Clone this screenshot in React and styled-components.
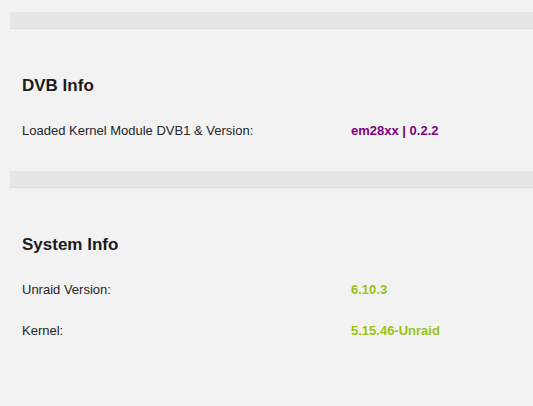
import styled, { createGlobalStyle } from 'styled-components';

const GlobalStyle = createGlobalStyle`
  html, body {
    margin: 0;
    background: #f2f2f2;
    font-family: "Liberation Sans", Arial, sans-serif;
  }
`;

const Page = styled.main`
  padding: 12px 0 0 10px;
`;

const Band = styled.div`
  height: 16px;
  background: #e6e6e6;
  border-bottom: 1px solid #dedede;
`;

const Body = styled.div`
  padding: 45px 0 20px 12px;
`;

const Title = styled.h2`
  margin: 0 0 12px;
  font-size: 17px;
  line-height: 24px;
  font-weight: bold;
  color: #1c1b1b;
`;

const Row = styled.div`
  display: flex;
  height: 41px;
  line-height: 41px;
  font-size: 13px;
`;

const Label = styled.span`
  width: 329px;
  color: #262626;
`;

const Value = styled.span`
  font-weight: bold;
  color: ${(p) => p.$color};
`;

const sections = [
  {
    title: 'DVB Info',
    color: '#800080',
    rows: [['Loaded Kernel Module DVB1 & Version:', 'em28xx | 0.2.2']],
  },
  {
    title: 'System Info',
    color: '#98c414',
    rows: [
      ['Unraid Version:', '6.10.3'],
      ['Kernel:', '5.15.46-Unraid'],
    ],
  },
];

export default function App() {
  return (
    <>
      <GlobalStyle />
      <Page>
        {sections.map((s) => (
          <section key={s.title}>
            <Band />
            <Body>
              <Title>{s.title}</Title>
              {s.rows.map(([label, value]) => (
                <Row key={label}>
                  <Label>{label}</Label>
                  <Value $color={s.color}>{value}</Value>
                </Row>
              ))}
            </Body>
          </section>
        ))}
      </Page>
    </>
  );
}
